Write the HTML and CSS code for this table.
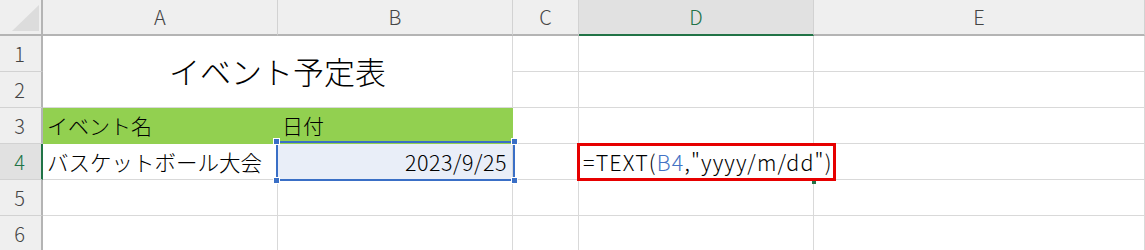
FILE: index.html
```html
<!DOCTYPE html>
<html lang="ja">
<head>
<meta charset="utf-8">
<title>イベント予定表</title>
<link rel="stylesheet" href="styles.css">
</head>
<body>
<div class="sheet">
  <!-- column headers -->
  <div class="corner">
    <svg width="43" height="36" viewBox="0 0 43 36"><polygon points="12,31 39,31 39,5" fill="#dcdcdc"/></svg>
  </div>
  <div class="ch">A</div>
  <div class="ch">B</div>
  <div class="ch">C</div>
  <div class="ch on">D</div>
  <div class="ch">E</div>

  <!-- row 1 -->
  <div class="rh">1</div>
  <div class="c title">イベント予定表</div>
  <div class="c"></div>
  <div class="c"></div>
  <div class="c"></div>

  <!-- row 2 -->
  <div class="rh">2</div>
  <div class="c"></div>
  <div class="c"></div>
  <div class="c"></div>

  <!-- row 3 -->
  <div class="rh">3</div>
  <div class="c head">イベント名</div>
  <div class="c head">日付</div>
  <div class="c"></div>
  <div class="c"></div>
  <div class="c"></div>

  <!-- row 4 -->
  <div class="rh on">4</div>
  <div class="c">バスケットボール大会</div>
  <div class="c date">2023/9/25</div>
  <div class="c"></div>
  <div class="c formula">=TEXT(<span class="ref">B4</span>,"yyyy/m/dd")</div>
  <div class="c"></div>

  <!-- row 5 -->
  <div class="rh">5</div>
  <div class="c"></div>
  <div class="c"></div>
  <div class="c"></div>
  <div class="c"></div>
  <div class="c"></div>

  <!-- row 6 -->
  <div class="rh">6</div>
  <div class="c"></div>
  <div class="c"></div>
  <div class="c"></div>
  <div class="c"></div>
  <div class="c"></div>

  <!-- overlays: referenced range, note frame, fill handle -->
  <div class="ref-box">
    <i class="handle tl"></i><i class="handle tr"></i><i class="handle bl"></i><i class="handle br"></i>
  </div>
  <div class="note-box"></div>
  <div class="fill-handle"></div>
</div>
</body>
</html>
```

FILE: styles.css
```css
html, body {
  margin: 0;
  padding: 0;
  background: #fff;
}

.sheet {
  position: relative;
  width: 1145px;
  height: 250px;
  overflow: hidden;
  display: grid;
  grid-template-columns: 43px 235px 235px 66px 235px 331px;
  grid-template-rows: repeat(7, 36px);
  font-family: "Noto Sans CJK JP", "Noto Sans", sans-serif;
  font-weight: 300;
  color: #000;
}

.sheet > div {
  box-sizing: border-box;
}

/* headers */
.corner {
  background: #efefef;
  border-right: 2px solid #b4b4b4;
  border-bottom: 2px solid #b4b4b4;
}
.corner svg {
  display: block;
}

.ch {
  background: #efefef;
  border-right: 1px solid #d2d2d2;
  border-bottom: 2px solid #b4b4b4;
  color: #444;
  font-size: 20px;
  display: flex;
  align-items: center;
  justify-content: center;
  padding-bottom: 1px;
}

.rh {
  background: #efefef;
  border-right: 2px solid #b4b4b4;
  border-bottom: 1px solid #d2d2d2;
  color: #444;
  font-size: 20px;
  display: flex;
  align-items: center;
  justify-content: center;
  padding-right: 2px;
}

.ch.on {
  background: #e1e1e1;
  color: #217346;
  border-bottom-color: #217346;
}
.rh.on {
  background: #e1e1e1;
  color: #217346;
  border-right-color: #217346;
}

/* cells */
.c {
  border-right: 1px solid #d9d9d9;
  border-bottom: 1px solid #d9d9d9;
  font-size: 21.5px;
  display: flex;
  align-items: center;
  padding: 0 4px 1px 4px;
  white-space: nowrap;
}

.title {
  grid-column: 2 / span 2;
  grid-row: 2 / span 2;
  justify-content: center;
  font-size: 31px;
  padding-bottom: 3px;
}

.head {
  background: #92d050;
  border-right-color: #92d050;
  border-bottom-color: #92d050;
  font-size: 21px;
}

.date {
  background: #e9eef8;
  justify-content: flex-end;
  padding-right: 5px;
  letter-spacing: 0.5px;
}

.formula {
  overflow: visible;
  border-right-color: transparent;
  letter-spacing: 1.15px;
}
.ref {
  color: #4472c4;
}

/* referenced range B4 */
.ref-box {
  position: absolute;
  left: 276px;
  top: 141px;
  width: 239px;
  height: 40px;
  border: 2px solid #3a6fc6;
  box-sizing: border-box;
}
.handle {
  position: absolute;
  width: 7px;
  height: 7px;
  background: #3a6fc6;
  border: 1px solid #fff;
  box-sizing: border-box;
}
.handle.tl { left: -5px; top: -5px; }
.handle.tr { right: -5px; top: -5px; }
.handle.bl { left: -5px; bottom: -5px; }
.handle.br { right: -5px; bottom: -5px; }

/* note frame around the formula */
.note-box {
  position: absolute;
  left: 577px;
  top: 143px;
  width: 259px;
  height: 38px;
  border: 3px solid #e60000;
  box-sizing: border-box;
}

.fill-handle {
  position: absolute;
  left: 812px;
  top: 181px;
  width: 4px;
  height: 3px;
  background: #217346;
}
```
